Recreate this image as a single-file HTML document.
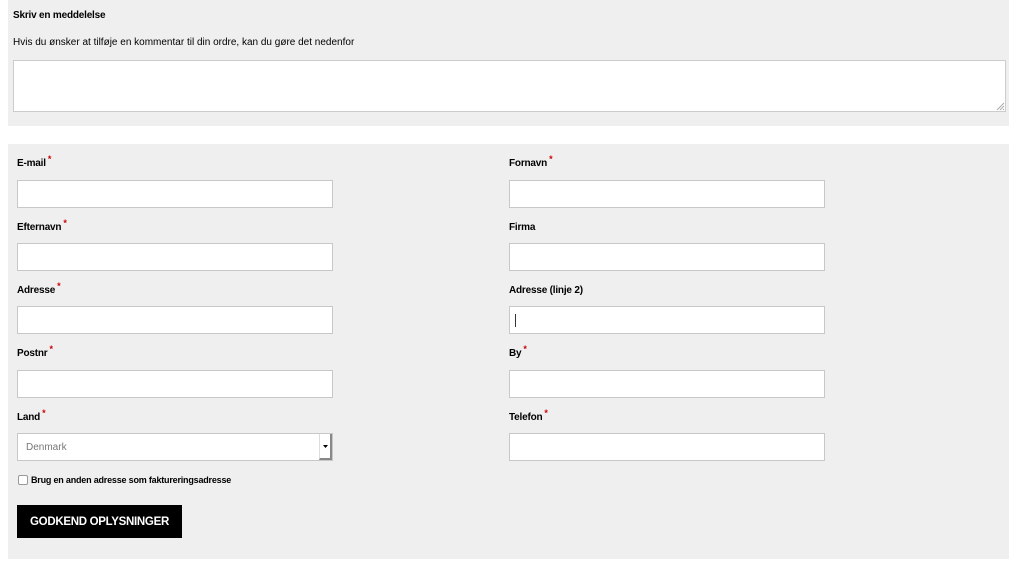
<!DOCTYPE html>
<html><head><meta charset="utf-8"><style>
*{box-sizing:border-box;margin:0;padding:0}
body{width:1024px;height:575px;background:#fff;font-family:"Liberation Sans",sans-serif;position:relative;overflow:hidden;color:#000}
.p{position:absolute;background:#efefef;left:8px;width:1001px}
.a{position:absolute}
.lab{position:absolute;font-size:10px;font-weight:bold;letter-spacing:-0.2px}
.lab i{color:#c00;font-style:normal;font-size:9px;position:relative;top:-4px;margin-left:2px}
.in{position:absolute;width:316px;height:28px;background:#fff;border:1px solid #c8c8c8}
</style></head><body>
<div class="p" style="top:0;height:126px"></div>
<div class="lab" style="left:13px;top:10px">Skriv en meddelelse</div>
<div class="a" style="left:13px;top:37px;font-size:10px">Hvis du ønsker at tilføje en kommentar til din ordre, kan du gøre det nedenfor</div>
<div class="a" style="left:13px;top:60px;width:993px;height:52px;background:#fff;border:1px solid #ccc"></div>
<svg class="a" style="left:995px;top:101px" width="10" height="10"><path d="M9 2L2 9M9 5L5 9M9 8L8 9" stroke="#aaa"/></svg>
<div class="p" style="top:144px;height:415px"></div>

<div class="lab" style="left:17px;top:158px">E-mail<i>*</i></div>
<div class="in" style="left:17px;top:180px"></div>
<div class="lab" style="left:509px;top:158px">Fornavn<i>*</i></div>
<div class="in" style="left:509px;top:180px"></div>

<div class="lab" style="left:17px;top:222px">Efternavn<i>*</i></div>
<div class="in" style="left:17px;top:243px"></div>
<div class="lab" style="left:509px;top:222px">Firma</div>
<div class="in" style="left:509px;top:243px"></div>

<div class="lab" style="left:17px;top:285px">Adresse<i>*</i></div>
<div class="in" style="left:17px;top:306px"></div>
<div class="lab" style="left:509px;top:285px">Adresse (linje 2)</div>
<div class="in" style="left:509px;top:306px"><div class="a" style="left:5px;top:7px;width:1px;height:13px;background:#333"></div></div>

<div class="lab" style="left:17px;top:348px">Postnr<i>*</i></div>
<div class="in" style="left:17px;top:370px"></div>
<div class="lab" style="left:509px;top:348px">By<i>*</i></div>
<div class="in" style="left:509px;top:370px"></div>

<div class="lab" style="left:17px;top:412px">Land<i>*</i></div>
<div class="in" style="left:17px;top:433px"><span class="a" style="left:8px;top:8px;font-size:10px;color:#777">Denmark</span>
<div class="a" style="right:0;top:0;width:13px;height:26px;border-left:1px solid #ddd;border-right:2px solid #888;border-bottom:2px solid #888"></div>
<svg class="a" style="right:4px;top:11px" width="5" height="4"><path d="M0 0H5L2.5 3Z" fill="#000"/></svg></div>
<div class="lab" style="left:509px;top:412px">Telefon<i>*</i></div>
<div class="in" style="left:509px;top:433px"></div>

<div class="a" style="left:18px;top:475px;width:10px;height:10px;border:1px solid #999;border-radius:2px;background:#fff"></div>
<div class="lab" style="left:31px;top:475px;font-size:9px">Brug en anden adresse som faktureringsadresse</div>
<div class="a" style="left:17px;top:505px;width:165px;height:33px;background:#000;color:#fff;font-weight:bold;font-size:11.5px;text-align:center;line-height:34px;letter-spacing:-0.3px">GODKEND OPLYSNINGER</div>
</body></html>
